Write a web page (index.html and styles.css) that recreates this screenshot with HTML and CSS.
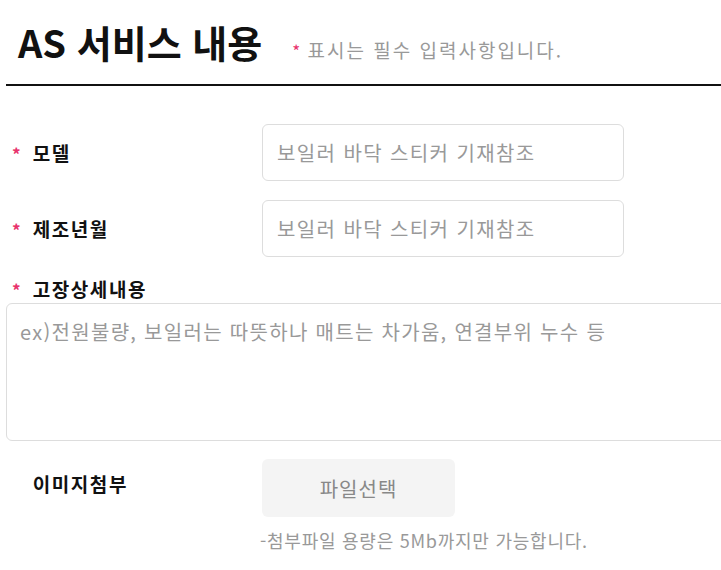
FILE: index.html
```html
<!DOCTYPE html>
<html lang="ko">
<head>
    <meta charset="UTF-8">
    <meta name="viewport" content="width=device-width, initial-scale=1.0">
    <title>AS 서비스 내용</title>
    <link rel="stylesheet" href="styles.css">
</head>
<body>
    <div class="wrap">
        <!-- 제목 -->
        <div class="head">
            <h2 class="title">AS 서비스 내용</h2>
            <p class="notice"><span class="req">*</span> 표시는 필수 입력사항입니다.</p>
        </div>

        <!-- 입력 폼 -->
        <div class="form">
            <div class="row">
                <label class="label"><span class="req">*</span>모델</label>
                <input class="field" type="text" placeholder="보일러 바닥 스티커 기재참조">
            </div>
            <div class="row">
                <label class="label"><span class="req">*</span>제조년월</label>
                <input class="field" type="text" placeholder="보일러 바닥 스티커 기재참조">
            </div>
            <div class="block">
                <label class="label"><span class="req">*</span>고장상세내용</label>
                <textarea class="area" placeholder="ex)전원불량, 보일러는 따뜻하나 매트는 차가움, 연결부위 누수 등"></textarea>
            </div>
            <div class="row file-row">
                <label class="label"><span class="req hidden">*</span>이미지첨부</label>
                <div class="file-box">
                    <button class="file-btn" type="button">파일선택</button>
                    <p class="file-note">-첨부파일 용량은 5Mb까지만 가능합니다.</p>
                </div>
            </div>
        </div>
    </div>
</body>
</html>
```

FILE: styles.css
```css
/* 기본 */
* {
    margin: 0;
    padding: 0;
    box-sizing: border-box;
    font-family: 'Noto Sans CJK KR', 'Noto Sans', sans-serif;
}

body {
    background: #fff;
    overflow: hidden;
    width: 721px;
}

.wrap {
    padding-left: 6px;
    width: 780px;
}

/* 제목 */
.head {
    display: flex;
    align-items: baseline;
    padding: 14px 0 0 12px;
    height: 86px;
    border-bottom: 2px solid #111;
}

.title {
    font-size: 38px;
    font-weight: 700;
    color: #111;
}

.notice {
    margin-left: 30px;
    font-size: 19px;
    color: #999;
    letter-spacing: 2px;
}

.notice .req {
    margin-right: 0;
}

.req {
    color: #e8336d;
    font-size: 17px;
    margin-right: 12px;
    letter-spacing: 0;
}

.hidden {
    visibility: hidden;
}

/* 폼 */
.form {
    padding-top: 38px;
}

.row {
    display: flex;
    align-items: center;
    margin-bottom: 19px;
}

.label {
    display: block;
    width: 256px;
    padding-left: 6px;
    font-size: 19px;
    font-weight: 700;
    color: #111;
    letter-spacing: 1.6px;
}

.field {
    width: 362px;
    height: 57px;
    padding: 0 14px;
    border: 1px solid #ddd;
    border-radius: 6px;
    font-size: 20px;
    letter-spacing: 1.4px;
    color: #333;
    outline: none;
}

.field::placeholder,
.area::placeholder {
    color: #999;
}

.block .label {
    line-height: 26px;
}

.area {
    display: block;
    width: 760px;
    height: 138px;
    padding: 13px 13px;
    border: 1px solid #ddd;
    border-radius: 6px;
    font-size: 20px;
    letter-spacing: 1.3px;
    resize: none;
    outline: none;
}

.file-row {
    align-items: flex-start;
    margin-top: 18px;
}

.file-row .label {
    padding-top: 11px;
}

.file-btn {
    width: 193px;
    height: 58px;
    border: none;
    border-radius: 6px;
    background: #f4f4f4;
    color: #888;
    font-size: 20px;
    letter-spacing: 1px;
    cursor: pointer;
}

.file-note {
    margin-top: 10px;
    margin-left: -2px;
    font-size: 18px;
    color: #999;
    letter-spacing: 0.75px;
}
```
